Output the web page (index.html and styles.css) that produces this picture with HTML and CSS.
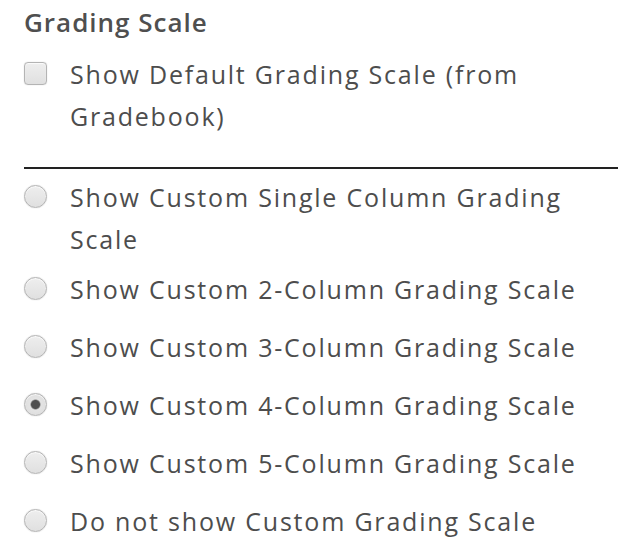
FILE: index.html
```html
<!DOCTYPE html>
<html lang="en">
<head>
    <meta charset="UTF-8">
    <title>Grading Scale</title>
    <link rel="stylesheet" href="styles.css">
</head>
<body>
    <div class="panel">
        <h2>Grading Scale</h2>
        <label class="option">
            <input type="checkbox" name="defaultScale">
            <span>Show Default Grading Scale (from Gradebook)</span>
        </label>

        <hr class="divider">

        <div class="options">
            <div class="row"><label class="option"><input type="radio" name="customScale" value="1"><span>Show Custom Single Column Grading Scale</span></label></div>
            <div class="row"><label class="option"><input type="radio" name="customScale" value="2"><span>Show Custom 2-Column Grading Scale</span></label></div>
            <div class="row"><label class="option"><input type="radio" name="customScale" value="3"><span>Show Custom 3-Column Grading Scale</span></label></div>
            <div class="row"><label class="option"><input type="radio" name="customScale" value="4" checked><span>Show Custom 4-Column Grading Scale</span></label></div>
            <div class="row"><label class="option"><input type="radio" name="customScale" value="5"><span>Show Custom 5-Column Grading Scale</span></label></div>
            <div class="row"><label class="option"><input type="radio" name="customScale" value="none"><span>Do not show Custom Grading Scale</span></label></div>
        </div>
    </div>
</body>
</html>
```

FILE: styles.css
```css
body {
    font-family: "Open Sans", Lato, sans-serif;
    background-color: #fff;
    color: #4d4d4d;
    margin: 0;
    padding: 0;
}
.panel {
    width: 594px;
    margin-left: 24px;
    padding-top: 5px;
}
h2 {
    font-size: 26px;
    font-weight: 600;
    color: #4f4f4f;
    margin: 0 0 14px 0;
    line-height: 34px;
    letter-spacing: 1px;
}
.option {
    display: flex;
    align-items: flex-start;
    flex: 1;
    font-size: 25px;
    line-height: 42px;
    letter-spacing: 1.8px;
    cursor: pointer;
}
.option span {
    flex: 1;
}
.option input {
    appearance: none;
    -webkit-appearance: none;
    width: 23px;
    height: 23px;
    margin: 9px 23px 0 0;
    flex-shrink: 0;
    border: 1px solid #b4b4b4;
    background: linear-gradient(#eeeeee, #e0e0e0);
    box-shadow: 0 0 1px rgba(0, 0, 0, 0.25), inset 0 1px 1px rgba(255, 255, 255, 0.8);
}
.option input[type="checkbox"] {
    border-radius: 4px;
}
.option input[type="radio"] {
    border-radius: 50%;
}
.option input[type="radio"]:checked {
    background: radial-gradient(circle, #505050 0, #505050 4px, #e4e4e4 5.5px, #dadada 100%);
}
.divider {
    border: none;
    border-top: 2px solid #222;
    margin: 30px 0 7px 0;
}
.options {
    display: flex;
    flex-direction: column;
}
.row {
    display: flex;
    align-items: center;
    min-height: 58px;
}
```
